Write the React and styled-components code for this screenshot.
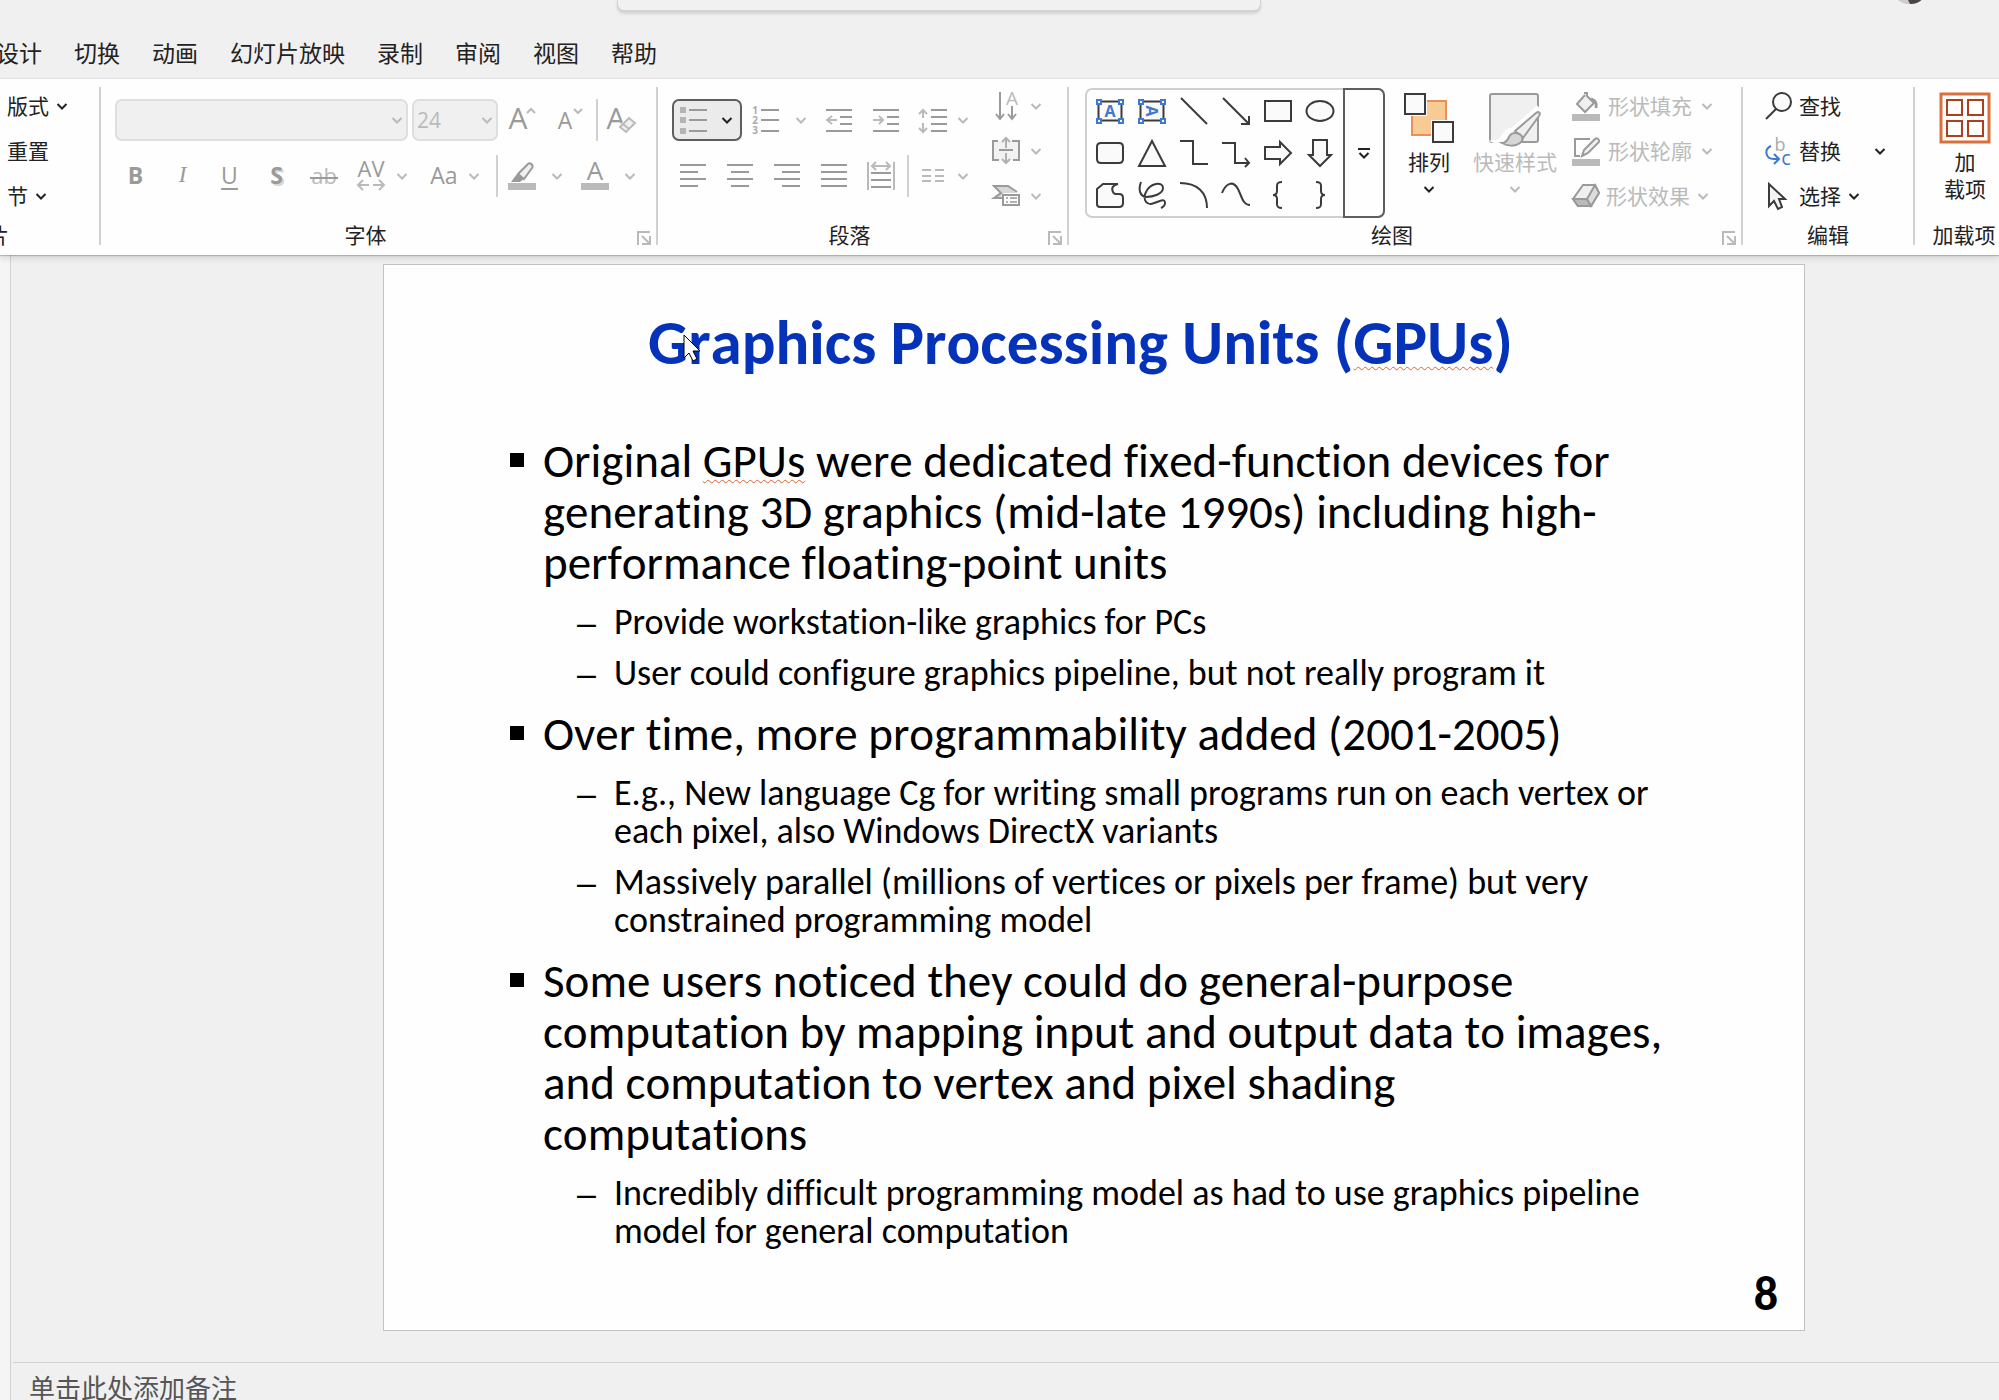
import React, { useState } from "react";
import styled, { createGlobalStyle, css } from "styled-components";

const GlobalStyle = createGlobalStyle`
  *, *::before, *::after {
    box-sizing: border-box;
  }

  body {
    margin: 0;
    background: #f0f0f0;
    color: #222;
    font-family: "Noto Sans CJK SC", "Open Sans", sans-serif;
    font-size: 21px;
    overflow: hidden;
  }

  button, input, select, textarea {
    font: inherit;
    color: inherit;
    border: 0;
    padding: 0;
    margin: 0;
    background: none;
    border-radius: 0;
  }
`;

// Window chrome
const Window = styled.div`
  display: flex;
  flex-direction: column;
  min-height: 100vh;
  overflow: hidden;
`;

const TitleBar = styled.header`
  display: flex;
  justify-content: space-between;
  align-items: flex-start;
  height: 28px;
  padding: 0 72px 0 618px;
`;

const SearchBox = styled.input`
  width: 642px;
  height: 10px;
  background: #f1f1f1;
  border-radius: 0 0 6px 6px;
  box-shadow: 0 1px 0 1px #d3d3d3, 0 3px 3px 1px rgba(0, 0, 0, 0.12);
`;

const Tabs = styled.nav`
  display: flex;
  align-items: center;
  height: 50px;
  margin-left: -20px;
  padding-bottom: 3px;
`;

const Tab = styled.button`
  padding: 0 16px;
  font-size: 23px;
  line-height: 32px;
  white-space: nowrap;
  cursor: pointer;
`;

// Ribbon
const Ribbon = styled.section`
  display: flex;
  position: relative;
  z-index: 1;
  height: 177px;
  padding: 8px 0 10px;
  background: #fefefe;
  border-top: 1px solid #e2e2e2;
  box-shadow: 0 1px 1px rgba(0, 0, 0, 0.2), 0 4px 6px rgba(0, 0, 0, 0.1);
`;

const Group = styled.div`
  display: flex;
  flex-direction: column;
  flex: none;
  width: ${(p) => p.$w}px;
  border-right: 2px solid ${(p) => (p.$last ? "transparent" : "#d1d1d1")};
`;

const GroupBody = styled.div`
  display: flex;
  flex: 1;
  padding-left: ${(p) => p.$pl || 0}px;
`;

const GroupFooter = styled.div`
  display: flex;
  justify-content: center;
  align-items: center;
  height: 20px;
  white-space: nowrap;
  ${(p) =>
    p.$clipped &&
    css`
      width: 9px;
      justify-content: flex-end;
    `}
`;

const GroupName = styled.span`
  flex: ${(p) => (p.$grow ? 1 : "none")};
  margin-bottom: 3px;
  text-align: center;
  line-height: 20px;
`;

const Launcher = styled.button`
  display: flex;
  width: 14px;
  height: 14px;
  margin: 6px 5px 0 7px;
`;

const Lines = styled.div`
  display: flex;
  flex-direction: column;
  gap: 14px;
  padding-top: 12px;
`;

const Line = styled.div`
  display: flex;
  align-items: center;
  height: 42px;
  padding-left: ${(p) => p.$pl || 0}px;
`;

const Stack = styled.div`
  display: flex;
  flex-direction: column;
  gap: 7px;
  margin-left: ${(p) => p.$ml || 0}px;
`;

const StackButton = styled.button`
  display: flex;
  align-items: center;
  gap: ${(p) => p.$gap || 6}px;
  height: 38px;
  white-space: nowrap;
  color: ${(p) => (p.disabled ? "#bababa" : "#222")};
`;

const Caption = styled.span`
  margin-right: ${(p) => p.$mr || 0}px;
  padding-bottom: 3px;
`;

const ToolButton = styled.button`
  display: flex;
  flex: none;
  justify-content: center;
  align-items: center;
  width: ${(p) => p.$w || 47}px;
  height: 42px;
  margin-left: ${(p) => p.$ml || 0}px;
  color: #9a9a9a;
`;

const ToggleButton = styled.button`
  display: flex;
  align-items: center;
  justify-content: space-between;
  width: 70px;
  height: 42px;
  padding: 0 6px;
  background: #ebebeb;
  border: 2px solid #5e5e5e;
  border-radius: 7px;
  color: #222;
`;

const Divider = styled.span`
  width: 2px;
  height: 42px;
  margin-left: ${(p) => p.$ml || 0}px;
  background: #d1d1d1;
`;

const Combo = styled.label`
  display: flex;
  align-items: center;
  width: ${(p) => p.$w}px;
  height: 42px;
  margin-right: 4px;
  padding: 0 2px 0 3px;
  background: #f0f0f0;
  border: 2px solid #dedede;
  border-radius: 7px;
  color: #bababa;
  font-family: "Open Sans", sans-serif;

  input, select {
    flex: 1;
    min-width: 0;
    appearance: none;
    opacity: 1;
  }
`;

const Glyph = styled.span`
  font-size: 23px;
  line-height: 28px;
  padding-bottom: 2px;
  font-weight: ${(p) => (p.$bold ? 700 : 400)};
  font-style: ${(p) => (p.$italic ? "italic" : "normal")};
  font-family: ${(p) => (p.$italic ? '"Liberation Serif", serif' : '"Open Sans", sans-serif')};
  text-shadow: ${(p) => (p.$shadow ? "2px 2px 0 #d8d8d8" : "none")};
  text-decoration: ${(p) => p.$line || "none"};
  text-decoration-thickness: 2px;
  text-underline-offset: 4px;
`;

// Drawing group
const Gallery = styled.div`
  display: flex;
  width: 300px;
  height: 130px;
  margin-top: 1px;
  border: 2px solid #cfcfcf;
  border-radius: 7px;
`;

const ShapeGrid = styled.div`
  display: grid;
  grid-template-columns: repeat(6, 42px);
  grid-auto-rows: 42px;
  flex: 1;
  padding-left: 2px;
`;

const ShapeButton = styled.button`
  display: flex;
  align-items: center;
  justify-content: center;
`;

const MoreShapes = styled.button`
  display: flex;
  align-items: center;
  justify-content: center;
  width: 42px;
  height: 130px;
  margin: -2px;
  border: 2px solid #5e5e5e;
  border-radius: 0 7px 7px 0;
`;

const BigButton = styled.button`
  display: flex;
  flex-direction: column;
  align-items: center;
  flex: none;
  width: ${(p) => p.$w}px;
  padding-top: 6px;
  color: ${(p) => (p.disabled ? "#bababa" : "#222")};
  line-height: 27px;
  white-space: nowrap;
`;

const BigIcon = styled.span`
  display: flex;
  justify-content: center;
  height: 50px;
  margin-bottom: 5px;
`;

const ChevronBox = styled.span`
  display: flex;
  margin-top: 7px;
`;

// Editing area
const Workspace = styled.main`
  display: flex;
  flex: 1;
`;

const ThumbnailEdge = styled.aside`
  width: 11px;
  background: #f5f5f5;
  border-right: 1px solid #d1d1d1;
`;

const Editor = styled.div`
  display: flex;
  flex-direction: column;
  flex: 1;
  min-width: 0;
`;

const Slide = styled.article`
  display: flex;
  flex-direction: column;
  position: relative;
  aspect-ratio: 4 / 3;
  margin: 9px 194px 31px 372px;
  padding: 44px 26px 14px 126px;
  background: #fefefe;
  border: 1px solid #c3c3c3;
  color: #000;
  font-family: Carlito, Calibri, "Open Sans", sans-serif;
  font-variant-ligatures: none;
`;

const SlideTitle = styled.h1`
  margin: 0 0 59px;
  padding-right: 127px;
  color: #0432b8;
  font-size: 63px;
  line-height: 68px;
  font-weight: 700;
  font-kerning: none;
  text-align: center;
  white-space: nowrap;
`;

const Misspelled = styled.span`
  text-decoration: underline wavy #d9632f 1px;
  text-decoration-skip-ink: none;
  text-underline-offset: 2px;
`;

const Bullets = styled.ul`
  display: flex;
  flex-direction: column;
  gap: 17px;
  margin: 0;
  padding: 0;
  list-style: none;
`;

const Bullet = styled.li`
  display: grid;
  grid-template-columns: 33px 1fr;
  font-size: 47px;
  line-height: 51px;
  font-kerning: none;
  white-space: nowrap;

  &::before {
    content: "";
    width: 14px;
    height: 14px;
    margin-top: 17px;
    background: #000;
  }
`;

const SubBullets = styled.ul`
  display: flex;
  flex-direction: column;
  gap: 13px;
  margin: 14px 0 0;
  padding: 0 0 0 34px;
  font-kerning: normal;
  list-style: none;
`;

const SubBullet = styled.li`
  display: grid;
  grid-template-columns: 37px 1fr;
  font-size: 36px;
  line-height: 38px;

  &::before {
    content: "–";
    font-family: "Liberation Sans", sans-serif;
    font-size: 34px;
  }
`;

const PageNumber = styled.footer`
  margin-top: auto;
  font-size: 48px;
  line-height: 44px;
  font-weight: 700;
  text-align: right;
`;

const Pointer = styled.svg`
  position: absolute;
  left: 299px;
  top: 69px;
`;

const Notes = styled.textarea`
  flex: 1;
  margin-left: 2px;
  padding: 6px 16px 0;
  border-top: 1px solid #d1d1d1;
  color: #555;
  font-size: 26px;
  line-height: 36px;
  resize: none;
  overflow: hidden;

  &::placeholder {
    color: #555;
    opacity: 1;
  }
`;

// Icons
const DIM = "#9a9a9a";
const PALE = "#bababa";

const Drawing = styled.svg`
  display: block;
  flex: none;
  overflow: visible;
  font-family: "Open Sans", sans-serif;
`;

const Icon = ({ w = 28, h = 28, children, stroke = DIM, sw = 2 }) => (
  <Drawing width={w} height={h} viewBox={`0 0 ${w} ${h}`} fill="none" stroke={stroke} strokeWidth={sw} aria-hidden="true">
    {children}
  </Drawing>
);

const Letter = ({ x, y, size, color = DIM, weight = 400, children, ...rest }) => (
  <text x={x} y={y} fontSize={size} fill={color} stroke="none" fontWeight={weight} textAnchor="middle" {...rest}>
    {children}
  </text>
);

const Chevron = ({ color = "currentColor" }) => (
  <Icon w={14} h={14} stroke={color}>
    <path d="M2.5 5 7 9.5 11.5 5" />
  </Icon>
);

const LauncherIcon = () => (
  <Icon w={14} h={14} stroke={PALE}>
    <path d="M1 14V1h12M5 5l7 7M13 5v8H5" />
  </Icon>
);

const GrowFont = () => (
  <Icon>
    <Letter x={9} y={23} size={30}>A</Letter>
    <path d="M18 7l4-4 4 4" stroke={PALE} />
  </Icon>
);

const ShrinkFont = () => (
  <Icon>
    <Letter x={9} y={23} size={23}>A</Letter>
    <path d="M18 3l4 4 4-4" stroke={PALE} />
  </Icon>
);

const ClearFormat = () => (
  <Icon>
    <Letter x={8} y={23} size={30}>A</Letter>
    <path d="M12 22 21 12l6 6-9 10z" fill="#fefefe" stroke="#fefefe" strokeWidth="4" />
    <path d="M12 21 21 12l6 5-9 9zM15 18l6 5" fill="#f0f0f0" stroke={PALE} />
  </Icon>
);

const Strike = () => (
  <Icon>
    <Letter x={14} y={22} size={22} color={PALE}>ab</Letter>
    <path d="M0 16h28" />
  </Icon>
);

const Spacing = () => (
  <Icon h={36}>
    <Letter x={14} y={19} size={22}>AV</Letter>
    <path d="M12 27H2M6 22l-5 5 5 5M16 27h10M22 22l5 5-5 5" stroke={PALE} />
  </Icon>
);

const Highlight = () => (
  <Icon>
    <path d="M10 12 20 2c2-2 6 1 4 4L16 17z" fill="#f0f0f0" />
    <path d="M9 12l7 5-4 3H3z" fill={DIM} stroke="none" />
    <path d="M0 21h28v7H0z" fill={PALE} stroke="none" />
  </Icon>
);

const FontColor = () => (
  <Icon>
    <Letter x={14} y={18} size={26}>A</Letter>
    <path d="M0 21h28v7H0z" fill={PALE} stroke="none" />
  </Icon>
);

const BulletIcon = () => (
  <Icon>
    <path d="M0 1h6v6H0zM0 11h6v6H0zM0 22h6v6H0z" fill="#b4b4b4" stroke="none" />
    <path d="M9 4h18M9 14h18M9 25h18" />
  </Icon>
);

const NumberIcon = () => (
  <Icon>
    <Letter x={3} y={8} size={10} color="#aaa" weight={700}>1</Letter>
    <Letter x={3} y={18} size={10} color="#aaa" weight={700}>2</Letter>
    <Letter x={3} y={28} size={10} color="#aaa" weight={700}>3</Letter>
    <path d="M9 4h18M9 14h18M9 25h18" />
  </Icon>
);

const Outdent = () => (
  <Icon>
    <path d="M1 4h26M15 11h12M15 18h12M1 25h26" />
    <path d="M12 14H3M7 10l-5 4 5 4" stroke={PALE} />
  </Icon>
);

const Indent = () => (
  <Icon>
    <path d="M1 4h26M15 11h12M15 18h12M1 25h26" />
    <path d="M1 14h9M7 10l4 4-4 4" stroke={PALE} />
  </Icon>
);

const LineSpacing = () => (
  <Icon>
    <path d="M12 4h16M12 11h16M12 18h16M12 25h16" />
    <path d="M4 12V4M0 8l4-4 4 4M4 17v9M0 22l4 4 4-4" stroke={PALE} />
  </Icon>
);

const AlignLines = ({ d }) => (
  <Icon>
    <path d={d} />
  </Icon>
);

const Distribute = () => (
  <Icon>
    <path d="M1 0v28M27 0v28" stroke={PALE} />
    <path d="M4 11h20M4 18h20M4 25h20" />
    <path d="M5 4h18M9 0 5 4l4 4M19 0l4 4-4 4" stroke={PALE} />
  </Icon>
);

const Columns = () => (
  <Icon>
    <path d="M3 8h9M16 8h9M3 14h9M16 14h9M3 19h9M16 19h9" stroke={PALE} />
  </Icon>
);

const TextDirection = () => (
  <Icon>
    <path d="M8 0v26M4 22l4 5 4-5M20 14v12M16 22l4 5 4-5" />
    <Letter x={20} y={13} size={19} color={PALE}>A</Letter>
  </Icon>
);

const AlignText = () => (
  <Icon>
    <path d="M1 4h26v19H1z" fill="#f2f2f2" stroke="none" />
    <path d="M6 4H1v19h6M20 4h7v19h-6M7 13h14" />
    <path d="M14 11V2M10 5l4-4 4 4M14 16v9M10 22l4 4 4-4" stroke="#b0b0b0" />
  </Icon>
);

const SmartArt = () => (
  <Icon>
    <path d="M1 4h15l8 7H12l-4 5H2l6-6z" fill="#d8d8d8" stroke="none" />
    <path d="M25 10l-9-6H2l7 7-7 5h8" />
    <path d="M11 13h16v10H11z" fill="#fefefe" />
    <path d="M14 16h2M18 16h7M14 20h2M18 20h7" stroke="#b0b0b0" />
  </Icon>
);

const ArrangeIcon = () => (
  <Icon w={50} h={50} stroke="#3b3b3b">
    <path d="M8 8h34v34H8z" fill="#f7cb93" stroke="#ea8f58" />
    <path d="M0 0h23v23H0zM27 27h23v23H27z" fill="#fefefe" stroke="none" />
    <path d="M1 1h20v20H1zM29 29h20v20H29z" fill="#fafafa" />
  </Icon>
);

const QuickStyleIcon = () => (
  <Icon w={54} h={54}>
    <rect x="2" y="1" width="48" height="48" rx="2" fill="#f0f0f0" />
    <path d="M52 19 34 40c-4 6-14 13-24 9 7-1 5-12 15-12L49 16z" fill="#fefefe" stroke="#fefefe" strokeWidth="5" />
    <path d="M27 38 48 20c3-2 5 0 3 3L35 45z" fill="#f0f0f0" />
    <path d="M14 50c8 0 5-11 14-10 6 1 9 6 4 10-5 4-13 3-18 0z" fill="#d6d6d6" />
  </Icon>
);

const FillIcon = () => (
  <Icon>
    <path d="M13 3 5 12l8 8 9-9-7-7V1h-3" fill="#f0f0f0" />
    <path d="M19 7c4 1 6 3 5 9" strokeWidth="3" />
    <path d="M0 22h28v7H0z" fill={PALE} stroke="none" />
  </Icon>
);

const OutlineIcon = () => (
  <Icon>
    <path d="M18 2H3v17h5" />
    <path d="M10 19l2-6L23 2c2-2 5 1 4 3L16 16z" fill="#f0f0f0" />
    <path d="M0 22h28v7H0z" fill={PALE} stroke="none" />
  </Icon>
);

const EffectsIcon = () => (
  <Icon>
    <path d="M11 3h12l4 8-8 13H6L1 17z" fill="#f0f0f0" />
    <path d="M1 17h14l4 7H6z" fill={PALE} />
    <path d="M23 3l4 8-8 13-4-7z" fill="#dcdcdc" />
  </Icon>
);

const FindIcon = () => (
  <Icon stroke="#3b3b3b">
    <circle cx="17" cy="10" r="9" fill="#fafafa" />
    <path d="M11 17 1 27" />
  </Icon>
);

const ReplaceIcon = () => (
  <Icon stroke="#3f78d0">
    <Letter x={15} y={14} size={18} color="#aaa">b</Letter>
    <Letter x={21} y={28} size={20} color="#3f78d0">c</Letter>
    <path d="M6 9c-7 3-6 13 3 13h4M9 17l5 5-5 5" />
  </Icon>
);

const SelectIcon = () => (
  <Icon stroke="#3b3b3b">
    <path d="M4 2v22l5-5 4 8 4-2-3-8h6z" fill="#f4f4f4" />
  </Icon>
);

const AddInsIcon = () => (
  <Icon w={50} h={50} stroke="#ab4020">
    <path d="M1 1h48v48H1z" stroke="#d9703c" strokeWidth="3" />
    <path d="M7 7h15v15H7zM28 7h15v15H28zM7 28h15v15H7zM28 28h15v15H28z" />
  </Icon>
);

const TextBoxShape = ({ vertical }) => (
  <Icon stroke="#3b3b3b">
    <path d="M2.5 4.5h23v19h-23z" fill="#fafafa" />
    <g stroke="#3f78d0" fill="#fefefe">
      <path d="M1 3h4v4H1zM23 3h4v4h-4zM1 22h4v4H1zM23 22h4v4h-4z" />
    </g>
    <Letter x={14} y={20} size={16} weight={700} color="#3f78d0" transform={vertical ? "rotate(90 14 14)" : undefined}>
      A
    </Letter>
  </Icon>
);

const FILL = "#fafafa";

const shapes = [
  { name: "文本框", node: <TextBoxShape /> },
  { name: "竖排文本框", node: <TextBoxShape vertical /> },
  { name: "直线", d: "M1 1l26 26" },
  { name: "箭头", d: "M1 1l26 26M27 19v8h-8" },
  { name: "矩形", d: "M1 4h26v20H1z", fill: FILL },
  { name: "椭圆", d: "M.5 14a13.5 10 0 0 1 27 0a13.5 10 0 0 1-27 0z", fill: FILL },
  { name: "圆角矩形", d: "M5 4h18q4 0 4 4v12q0 4-4 4H5q-4 0-4-4V8q0-4 4-4z", fill: FILL },
  { name: "三角形", d: "M14 2 27 27H1z", fill: FILL },
  { name: "肘形连接符", d: "M0 2h13v23h15" },
  { name: "肘形箭头连接符", d: "M0 4h13v20h14M23 19l4 5-4 4" },
  { name: "右箭头", d: "M1 8h15V3l11 11-11 11v-5H1z", fill: FILL },
  { name: "下箭头", d: "M7 1h14v15h4L14 27 3 16h4z", fill: FILL },
  {
    name: "任意多边形",
    d: "M1 8l6-5h15c-5 1-7 4-5 8 1 3 3 2 6 2s4 1 4 4v5c0 3-1 4-4 4H4c-2 0-3-1-3-3z",
    fill: FILL,
  },
  { name: "自由曲线", d: "M3 1C0 9 2 15 8 16c7 0 17-3 17-9C25 0 12 2 8 11c-3 6-1 12 5 12 6-1 14-7 14-1 0 3-2 4-4 5" },
  { name: "弧形", d: "M0 2c17 0 27 9 27 25" },
  { name: "曲线", d: "M0 12C4 2 11-1 16 8c4 8 5 16 12 16" },
  { name: "左大括号", d: "M18 1c-4 0-5 1-5 4v5c0 3-1 4-4 4 3 0 4 1 4 4v5c0 3 1 4 5 4" },
  { name: "右大括号", d: "M10 1c4 0 5 1 5 4v5c0 3 1 4 4 4-3 0-4 1-4 4v5c0 3-1 4-5 4" },
];

const alignments = [
  { name: "左对齐", w: 46, d: "M1 3h26M1 10h18M1 17h26M1 24h18" },
  { name: "居中", w: 48, d: "M1 3h26M5 10h18M1 17h26M5 24h18" },
  { name: "右对齐", w: 46, d: "M1 3h26M9 10h18M1 17h26M9 24h18" },
  { name: "两端对齐", w: 48, d: "M1 3h26M1 10h26M1 17h26M1 24h26" },
];

const tabs = ["设计", "切换", "动画", "幻灯片放映", "录制", "审阅", "视图", "帮助"];

const Footer = ({ children, launcher, clipped }) => (
  <GroupFooter $clipped={clipped}>
    <GroupName $grow={launcher}>{children}</GroupName>
    {launcher && (
      <Launcher aria-label={`${children}设置`}>
        <LauncherIcon />
      </Launcher>
    )}
  </GroupFooter>
);

const Drop = ({ w, ml, label }) => (
  <ToolButton $w={w} $ml={ml} disabled aria-label={label}>
    <Chevron color={PALE} />
  </ToolButton>
);

const SlidesGroup = () => (
  <Group $w={101}>
    <GroupBody $pl={7}>
      <Stack>
        <StackButton><Caption>版式</Caption><Chevron /></StackButton>
        <StackButton><Caption>重置</Caption></StackButton>
        <StackButton><Caption>节</Caption><Chevron /></StackButton>
      </Stack>
    </GroupBody>
    <Footer clipped>幻灯片</Footer>
  </Group>
);

const FontGroup = () => (
  <Group $w={557}>
    <GroupBody $pl={11}>
      <Lines>
        <Line $pl={3}>
          <Combo $w={293}>
            <input aria-label="字体" disabled />
            <Chevron />
          </Combo>
          <Combo $w={86}>
            <select aria-label="字号" disabled defaultValue="24">
              <option>24</option>
            </select>
            <Chevron />
          </Combo>
          <ToolButton $w={42} disabled aria-label="增大字号"><GrowFont /></ToolButton>
          <ToolButton $w={52} disabled aria-label="减小字号"><ShrinkFont /></ToolButton>
          <Divider />
          <ToolButton $w={48} disabled aria-label="清除格式"><ClearFormat /></ToolButton>
        </Line>
        <Line>
          <ToolButton disabled><Glyph $bold>B</Glyph></ToolButton>
          <ToolButton disabled><Glyph $italic>I</Glyph></ToolButton>
          <ToolButton disabled><Glyph $line="underline">U</Glyph></ToolButton>
          <ToolButton disabled><Glyph $bold $shadow>S</Glyph></ToolButton>
          <ToolButton disabled aria-label="删除线"><Strike /></ToolButton>
          <ToolButton disabled aria-label="字符间距"><Spacing /></ToolButton>
          <Drop w={16} label="字符间距选项" />
          <ToolButton $w={36} $ml={16} disabled><Glyph>Aa</Glyph></ToolButton>
          <Drop w={24} label="更改大小写" />
          <Divider $ml={10} />
          <ToolButton $w={48} disabled aria-label="突出显示"><Highlight /></ToolButton>
          <Drop w={22} label="突出显示颜色" />
          <ToolButton $w={46} $ml={4} disabled aria-label="字体颜色"><FontColor /></ToolButton>
          <Drop w={24} label="字体颜色选项" />
        </Line>
      </Lines>
    </GroupBody>
    <Footer launcher>字体</Footer>
  </Group>
);

const ParagraphGroup = () => (
  <Group $w={411}>
    <GroupBody $pl={12}>
      <Lines>
        <Line $pl={2}>
          <ToggleButton aria-label="项目符号" aria-pressed="true">
            <BulletIcon />
            <Chevron />
          </ToggleButton>
          <ToolButton disabled aria-label="编号"><NumberIcon /></ToolButton>
          <Drop w={24} label="编号选项" />
          <ToolButton $w={46} $ml={3} disabled aria-label="减少缩进"><Outdent /></ToolButton>
          <ToolButton $w={48} disabled aria-label="增加缩进"><Indent /></ToolButton>
          <ToolButton $w={46} disabled aria-label="行距"><LineSpacing /></ToolButton>
          <Drop w={14} label="行距选项" />
        </Line>
        <Line>
          {alignments.map((a) => (
            <ToolButton key={a.name} $w={a.w} disabled aria-label={a.name}>
              <AlignLines d={a.d} />
            </ToolButton>
          ))}
          <ToolButton $w={46} disabled aria-label="分散对齐"><Distribute /></ToolButton>
          <Divider $ml={3} />
          <ToolButton $w={47} disabled aria-label="分栏"><Columns /></ToolButton>
          <Drop w={14} label="分栏选项" />
        </Line>
      </Lines>
      <Stack $ml={22}>
        <StackButton disabled $gap={9} aria-label="文字方向"><TextDirection /><Chevron /></StackButton>
        <StackButton disabled $gap={9} aria-label="对齐文本"><AlignText /><Chevron /></StackButton>
        <StackButton disabled $gap={9} aria-label="转换为 SmartArt"><SmartArt /><Chevron /></StackButton>
      </Stack>
    </GroupBody>
    <Footer launcher>段落</Footer>
  </Group>
);

const DrawingGroup = () => (
  <Group $w={674}>
    <GroupBody $pl={16}>
      <Gallery>
        <ShapeGrid>
          {shapes.map((s) => (
            <ShapeButton key={s.name} aria-label={s.name}>
              {s.node || (
                <Icon stroke="#3b3b3b">
                  <path d={s.d} fill={s.fill} />
                </Icon>
              )}
            </ShapeButton>
          ))}
        </ShapeGrid>
        <MoreShapes aria-label="其他形状">
          <Icon w={14} h={14} stroke="#222">
            <path d="M1 3h12M2.5 7 7 11.5 11.5 7" />
          </Icon>
        </MoreShapes>
      </Gallery>
      <BigButton $w={88}>
        <BigIcon><ArrangeIcon /></BigIcon>
        排列
        <ChevronBox><Chevron /></ChevronBox>
      </BigButton>
      <BigButton $w={84} disabled>
        <BigIcon><QuickStyleIcon /></BigIcon>
        快速样式
        <ChevronBox><Chevron /></ChevronBox>
      </BigButton>
      <Stack $ml={15}>
        <StackButton disabled $gap={8}><FillIcon /><Caption>形状填充</Caption><Chevron /></StackButton>
        <StackButton disabled $gap={8}><OutlineIcon /><Caption>形状轮廓</Caption><Chevron /></StackButton>
        <StackButton disabled $gap={6}><EffectsIcon /><Caption>形状效果</Caption><Chevron /></StackButton>
      </Stack>
    </GroupBody>
    <Footer launcher>绘图</Footer>
  </Group>
);

const EditingGroup = () => (
  <Group $w={172}>
    <GroupBody $pl={22}>
      <Stack>
        <StackButton><FindIcon /><Caption>查找</Caption></StackButton>
        <StackButton><ReplaceIcon /><Caption $mr={26}>替换</Caption><Chevron /></StackButton>
        <StackButton><SelectIcon /><Caption>选择</Caption><Chevron /></StackButton>
      </Stack>
    </GroupBody>
    <Footer>编辑</Footer>
  </Group>
);

const AddInsGroup = () => (
  <Group $w={100} $last>
    <GroupBody>
      <BigButton $w={100}>
        <BigIcon><AddInsIcon /></BigIcon>
        <span>加<br />载项</span>
      </BigButton>
    </GroupBody>
    <Footer>加载项</Footer>
  </Group>
);

const SlideContent = () => (
  <Slide>
    <SlideTitle>
      Graphics Processing Units (<Misspelled>GPUs</Misspelled>)
    </SlideTitle>
    <Bullets>
      <Bullet>
        <div>
          Original <Misspelled>GPUs</Misspelled> were dedicated fixed-function devices for<br />
          generating 3D graphics (mid-late 1990s) including high-<br />
          performance floating-point units
          <SubBullets>
            <SubBullet>Provide workstation-like graphics for PCs</SubBullet>
            <SubBullet>User could configure graphics pipeline, but not really program it</SubBullet>
          </SubBullets>
        </div>
      </Bullet>
      <Bullet>
        <div>
          Over time, more programmability added (2001-2005)
          <SubBullets>
            <SubBullet>
              <span>
                E.g., New language Cg for writing small programs run on each vertex or<br />
                each pixel, also Windows DirectX variants
              </span>
            </SubBullet>
            <SubBullet>
              <span>
                Massively parallel (millions of vertices or pixels per frame) but very<br />
                constrained programming model
              </span>
            </SubBullet>
          </SubBullets>
        </div>
      </Bullet>
      <Bullet>
        <div>
          Some users noticed they could do general-purpose<br />
          computation by mapping input and output data to images,<br />
          and computation to vertex and pixel shading<br />
          computations
          <SubBullets>
            <SubBullet>
              <span>
                Incredibly difficult programming model as had to use graphics pipeline<br />
                model for general computation
              </span>
            </SubBullet>
          </SubBullets>
        </div>
      </Bullet>
    </Bullets>
    <PageNumber>8</PageNumber>
    <Pointer width="18" height="28" viewBox="0 0 18 28" aria-hidden="true">
      <path d="M1 1v23l5-5 4 8 4-2-4-8h7z" fill="#fff" stroke="#000" />
    </Pointer>
  </Slide>
);

export default function App() {
  const [notes, setNotes] = useState("");

  return (
    <>
      <GlobalStyle />
      <Window>
        <TitleBar>
          <SearchBox aria-label="搜索" />
          <svg width="32" height="5" viewBox="0 0 32 5" aria-hidden="true">
            <circle cx="16" cy="-12" r="16" fill="#4a4446" />
            <path d="M3 0h10l2 4C9 4 5 2 3 0z" fill="#d0cccd" />
          </svg>
        </TitleBar>
        <Tabs>
          {tabs.map((tab) => (
            <Tab key={tab}>{tab}</Tab>
          ))}
        </Tabs>
        <Ribbon>
          <SlidesGroup />
          <FontGroup />
          <ParagraphGroup />
          <DrawingGroup />
          <EditingGroup />
          <AddInsGroup />
        </Ribbon>
        <Workspace>
          <ThumbnailEdge />
          <Editor>
            <SlideContent />
            <Notes
              aria-label="备注"
              placeholder="单击此处添加备注"
              value={notes}
              onChange={(e) => setNotes(e.target.value)}
            />
          </Editor>
        </Workspace>
      </Window>
    </>
  );
}
